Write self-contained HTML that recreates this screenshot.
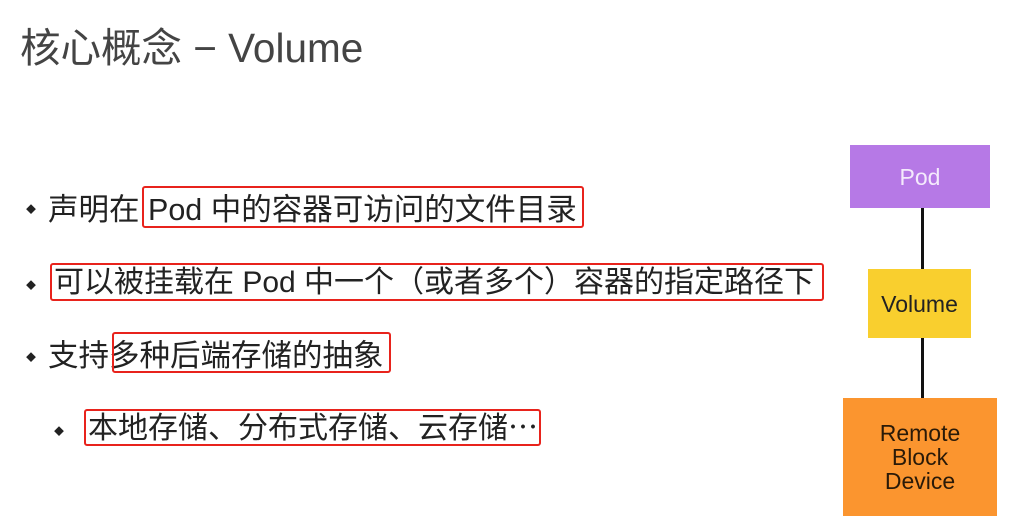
<!DOCTYPE html>
<html><head><meta charset="utf-8"><style>
body{margin:0;width:1031px;height:525px;background:#fff;position:relative;overflow:hidden;font-family:"Liberation Sans","Noto Sans CJK SC",sans-serif;color:#222}
.t{position:absolute;left:20px;top:15px;font-size:40.5px;color:#444;white-space:nowrap}
.l{position:absolute;font-size:30.5px;white-space:nowrap;line-height:36px}
.b{position:absolute;font-size:10px}
.r{position:absolute;border:2.5px solid #e8231c;border-radius:3px;box-sizing:border-box}
.box{position:absolute;display:flex;align-items:center;justify-content:center;text-align:center;font-size:23px;line-height:24px}
.ln{position:absolute;left:921px;width:3px;background:#111}
</style></head><body>
<div class="t">核心概念 − Volume</div>
<div class="b" style="left:26px;top:201px">◆</div>
<div class="b" style="left:26px;top:277px">◆</div>
<div class="b" style="left:26px;top:349px">◆</div>
<div class="b" style="left:54px;top:423px">◆</div>
<div class="l" style="left:48px;top:192px">声明在 Pod 中的容器可访问的文件目录</div>
<div class="l" style="left:54px;top:265px;font-size:30px">可以被挂载在 Pod 中一个（或者多个）容器的指定路径下</div>
<div class="l" style="left:48px;top:338px">支持多种后端存储的抽象</div>
<div class="l" style="left:88px;top:411px;font-size:30px">本地存储、分布式存储、云存储⋯</div>
<div class="r" style="left:142px;top:186px;width:442px;height:42px"></div>
<div class="r" style="left:50px;top:263px;width:774px;height:38px"></div>
<div class="r" style="left:112px;top:332px;width:279px;height:41px"></div>
<div class="r" style="left:84px;top:409px;width:457px;height:37px"></div>
<div class="ln" style="top:208px;height:62px"></div>
<div class="ln" style="top:338px;height:61px"></div>
<div class="box" style="left:850px;top:145px;width:140px;height:63px;background:#b679e6;color:#f4eafc">Pod</div>
<div class="box" style="left:868px;top:269px;width:103px;height:69px;background:#f9cf2e;color:#222">Volume</div>
<div class="box" style="left:843px;top:398px;width:154px;height:118px;background:#fb952f;color:#2a1a08">Remote<br>Block<br>Device</div>
</body></html>
